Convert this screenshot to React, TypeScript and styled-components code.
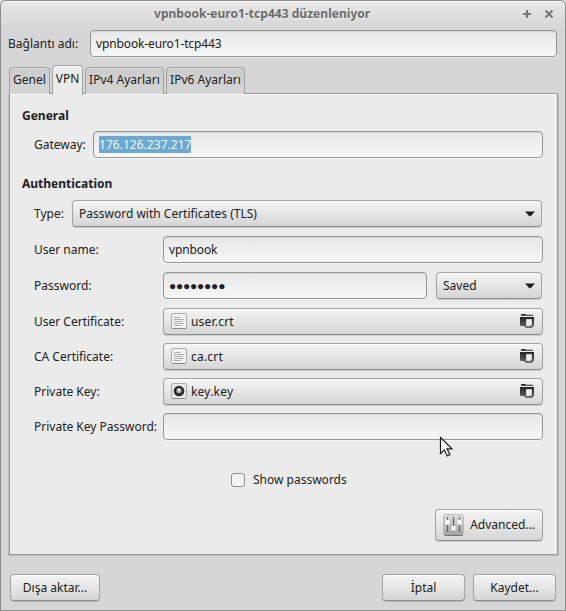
import React from "react";
import styled, { createGlobalStyle, css } from "styled-components";

const GlobalStyle = createGlobalStyle`
  * { box-sizing: border-box; }
  body { margin: 0; background: #d6d6d6; }
  input { margin: 0; }
`;

const Window = styled.main`
  position: relative;
  width: 566px;
  height: 611px;
  padding: 0 8px;
  border: 1px solid #8c8c8c;
  border-radius: 6px 6px 0 0;
  background: linear-gradient(#e8e8e8, #d6d6d6 27px);
  box-shadow: inset 0 1px #fafafa;
  font: 12px/18px "Noto Sans", sans-serif;
  color: #212121;
  overflow: hidden;
  white-space: nowrap;
`;

const TitleBar = styled.header`
  display: flex;
  height: 29px;
  padding: 0 3px 3px 145px;
  align-items: center;
`;

const Title = styled.h1`
  flex: 1;
  margin: 0;
  font-size: 12px;
  font-weight: 700;
  letter-spacing: 0.03px;
  color: #6b6b6b;
  text-shadow: 0 1px #f3f3f3;
`;

const WindowIcons = styled.svg`
  width: 32px;
  height: 12px;
`;

const NameRow = styled.div`
  display: flex;
  height: 27px;
  margin-left: -1px;
  align-items: center;
`;

const Label = styled.label<{ $width: number }>`
  flex: 0 0 ${(p) => p.$width}px;
  padding-top: 1px;
`;

const Field = styled.div<{ $width?: number }>`
  display: flex;
  flex: ${(p) => (p.$width ? `0 0 ${p.$width}px` : "1")};
  height: 27px;
  padding: 1px 5px 0;
  align-items: center;
  border: 1px solid #969696;
  border-radius: 4px;
  background: linear-gradient(#e7e7e7, #f6f6f6);
  box-shadow: inset 0 1px #d5d5d5, 0 1px rgba(255, 255, 255, 0.45);
  letter-spacing: -0.13px;
`;

const Selection = styled.span`
  height: 17px;
  margin-bottom: 1px;
  line-height: 18px;
  letter-spacing: 0.03px;
  color: #f2f7fa;
  background: #6ca9d0;
`;

const PasswordDots = styled.span`
  letter-spacing: -0.23px;
`;

const raised = css`
  border: 1px solid #a3a3a3;
  border-bottom-color: #8b8b8b;
  border-radius: 4px;
  background: linear-gradient(#f5f5f5, #d5d5d5);
  box-shadow: inset 0 1px #fcfcfc, 0 1px 1px rgba(0, 0, 0, 0.13);
`;

const Button = styled.button<{ $width?: number; $height?: number; $pad?: string; $spread?: boolean }>`
  ${raised}
  display: flex;
  flex: ${(p) => (p.$width ? `0 0 ${p.$width}px` : "1")};
  height: ${(p) => p.$height ?? 27}px;
  padding: ${(p) => p.$pad ?? "1px 0 0"};
  align-items: center;
  justify-content: ${(p) => (p.$spread ? "space-between" : "center")};
  font: inherit;
  color: inherit;
`;

const FileButton = styled(Button)`
  svg { margin-bottom: 2px; }
`;

const Tabs = styled.nav`
  display: flex;
  height: 29px;
  margin-top: 8px;
  gap: 2px;
  align-items: flex-end;
`;

const Tab = styled.button<{ $width: number; $active?: boolean }>`
  position: relative;
  z-index: ${(p) => (p.$active ? 1 : 0)};
  width: ${(p) => p.$width}px;
  height: ${(p) => (p.$active ? 30 : 27)}px;
  margin-bottom: ${(p) => (p.$active ? -1 : 0)}px;
  padding: 0 0 ${(p) => (p.$active ? 4 : 3)}px;
  border: 1px solid #a3a3a3;
  border-bottom: 0;
  border-radius: 4px 4px 0 0;
  background: ${(p) => (p.$active ? "#ebebeb" : "linear-gradient(#cbcbcb, #d6d6d6)")};
  box-shadow: ${(p) => (p.$active ? "inset 0 1px #fafafa" : "inset 0 1px #dcdcdc")};
  font: inherit;
  color: inherit;
`;

const Panel = styled.section`
  width: 549px;
  height: 462px;
  margin-top: -1px;
  padding: 13px 14px 0 12px;
  border: 1px solid #999;
  background: #ebebeb;
  box-shadow: inset 0 1px #fafafa, 1px 1px #bcbcbc, -1px 1px #bcbcbc;
`;

const Heading = styled.h2<{ $top?: number }>`
  height: 18px;
  margin: ${(p) => p.$top ?? 0}px 0 0;
  font-size: 12px;
  line-height: 18px;
  font-weight: 700;
`;

const Row = styled.div<{ $top: number; $right?: number }>`
  display: flex;
  height: 27px;
  margin: ${(p) => p.$top}px ${(p) => p.$right ?? 0}px 0 12px;
  align-items: center;
`;

const FileName = styled.span`
  display: flex;
  gap: 4px;
  align-items: center;
  letter-spacing: 0.2px;
`;

const CheckRow = styled.label`
  display: flex;
  height: 18px;
  margin: 31px 0 0 209px;
  gap: 8px;
  align-items: center;
`;

const Checkbox = styled.input`
  appearance: none;
  width: 14px;
  height: 14px;
  margin-bottom: 1px;
  border: 1px solid #8f8f8f;
  border-radius: 3px;
  background: linear-gradient(#eee, #f8f8f8);
`;

const AdvancedRow = styled.div`
  display: flex;
  margin-top: 20px;
  justify-content: flex-end;
`;

const Footer = styled.footer`
  display: flex;
  margin: 19px 1px 0;
  gap: 8px;
`;

const Spacer = styled.div`
  flex: 1;
`;

const Cursor = styled.svg`
  position: absolute;
  left: 437px;
  top: 434px;
  width: 15px;
  height: 24px;
`;

const Arrow = () => (
  <svg width="10" height="6" viewBox="0 0 10 6">
    <path d="M0 .5h10L6 4.8Q5 5.8 4 4.8Z" fill="#1c1c1c" />
  </svg>
);

const DocumentIcon = () => (
  <svg width="16" height="16" viewBox="0 0 16 16">
    <rect x=".5" y=".5" width="15" height="15" rx="1.5" fill="#f1f1f1" stroke="#aaa" />
    <path d="M1.5 15.5h13" stroke="#858585" />
    <path d="M3 4.5h7M3 6.5h10M3 8.5h9M3 10.5h10M3 12.5h7" stroke="#b0b0b0" />
  </svg>
);

const KeyIcon = () => (
  <svg width="16" height="16" viewBox="0 0 16 16">
    <rect x=".5" y=".5" width="15" height="15" rx="1.5" fill="#e9e9e9" stroke="#aaa" />
    <path d="M1.5 15.5h13" stroke="#858585" />
    <circle cx="8" cy="8" r="5.3" fill="#292929" />
    <circle cx="8" cy="7.7" r="2.6" fill="#a5a5a5" />
    <circle cx="8" cy="7" r="1.6" fill="#e8e8e8" />
  </svg>
);

const FolderIcon = () => (
  <svg width="14" height="14" viewBox="0 0 14 14">
    <defs>
      <linearGradient id="folder" x2="0" y2="1">
        <stop stopColor="#222" />
        <stop offset="1" stopColor="#6a6a6a" />
      </linearGradient>
    </defs>
    <path d="M1 1.5V.6Q1 0 1.7 0h3.6L6 .7h7v1H1Z" fill="#242424" />
    <path d="M0 3h14v8.5L11.8 14H6L4 12H1.2Q0 12 0 10.8Z" fill="url(#folder)" />
    <path d="M6.5 5.5h5v5.3l-1 1h-4Z" fill="#ececec" stroke="#d0d0d0" />
  </svg>
);

const MixerIcon = () => (
  <svg width="21" height="22" viewBox="0 0 21 22">
    <defs>
      <linearGradient id="mixer" x2="0" y2="1">
        <stop stopColor="#dedede" />
        <stop offset="1" stopColor="#a0a0a0" />
      </linearGradient>
    </defs>
    <rect x=".5" y=".5" width="20" height="21" rx="2" fill="url(#mixer)" stroke="#bebebe" />
    <path d="M1.5 21.5h18" stroke="#747474" />
    <path d="M4.5 3v15M10.5 3v15M16.5 3v15" stroke="#606060" strokeWidth="1.1" />
    <path d="M3 6h3l.5 2.5L6 10.5H3L2.5 8.5ZM9 12h3l.5 2L12 16.5H9l-.5-2.5ZM15 6h3l.5 2.5-.5 2h-3L14.5 8.5Z" fill="#fcfcfc" stroke="#eee" strokeWidth=".5" />
  </svg>
);

const files = [
  { label: "User Certificate:", name: "user.crt", top: 9, icon: <DocumentIcon /> },
  { label: "CA Certificate:", name: "ca.crt", top: 8, icon: <DocumentIcon /> },
  { label: "Private Key:", name: "key.key", top: 8, icon: <KeyIcon /> },
];

export default function App() {
  return (
    <>
      <GlobalStyle />
      <Window>
        <TitleBar>
          <Title>vpnbook-euro1-tcp443 düzenleniyor</Title>
          <WindowIcons viewBox="0 0 32 12">
            <path d="M1 6h8M5 2v8M23.5 2.5l7 7M30.5 2.5l-7 7" fill="none" stroke="#777" strokeWidth="2" />
          </WindowIcons>
        </TitleBar>
        <NameRow>
          <Label $width={82}>Bağlantı adı:</Label>
          <Field $width={467}>vpnbook-euro1-tcp443</Field>
        </NameRow>
        <Tabs>
          <Tab $width={41}>Genel</Tab>
          <Tab $width={31} $active>VPN</Tab>
          <Tab $width={79}>IPv4 Ayarları</Tab>
          <Tab $width={79}>IPv6 Ayarları</Tab>
        </Tabs>
        <Panel>
          <Heading>General</Heading>
          <Row $top={6}>
            <Label $width={59}>Gateway:</Label>
            <Field><Selection>176.126.237.217</Selection></Field>
          </Row>
          <Heading $top={17}>Authentication</Heading>
          <Row $top={7} $right={1}>
            <Label $width={38}>Type:</Label>
            <Button $spread $pad="1px 6px 0">Password with Certificates (TLS)<Arrow /></Button>
          </Row>
          <Row $top={9}>
            <Label $width={129}>User name:</Label>
            <Field>vpnbook</Field>
          </Row>
          <Row $top={9} $right={1}>
            <Label $width={129}>Password:</Label>
            <Field $width={264}><PasswordDots>●●●●●●●●</PasswordDots></Field>
            <Spacer />
            <Button $width={106} $spread $pad="1px 6px 0">Saved<Arrow /></Button>
          </Row>
          {files.map((file) => (
            <Row key={file.label} $top={file.top}>
              <Label $width={129}>{file.label}</Label>
              <FileButton $spread $pad="1px 8px 0 7px">
                <FileName>{file.icon}{file.name}</FileName>
                <FolderIcon />
              </FileButton>
            </Row>
          ))}
          <Row $top={8}>
            <Label $width={129}>Private Key Password:</Label>
            <Field />
          </Row>
          <CheckRow><Checkbox type="checkbox" />Show passwords</CheckRow>
          <AdvancedRow>
            <Button $width={108} $height={32} $pad="0 7px 1px" $spread><MixerIcon />Advanced...</Button>
          </AdvancedRow>
        </Panel>
        <Footer>
          <Button $width={90}>Dışa aktar...</Button>
          <Spacer />
          <Button $width={83}>İptal</Button>
          <Button $width={83}>Kaydet...</Button>
        </Footer>
        <Cursor viewBox="0 0 15 24">
          <path d="M2.5 2.5v16l3.8-3.6 3 6 2.6-1.3L9 13.8h5Z" fill="#fff" stroke="#1b1b1b" strokeWidth="1.2" />
        </Cursor>
      </Window>
    </>
  );
}
